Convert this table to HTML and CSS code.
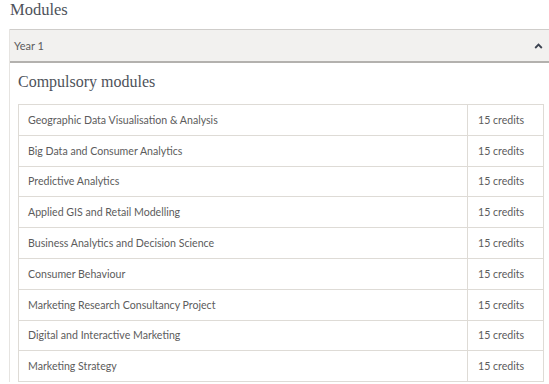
FILE: index.html
```html
<!DOCTYPE html>
<html lang="en">
<head>
    <meta charset="UTF-8">
    <meta name="viewport" content="width=device-width, initial-scale=1.0">
    <title>Modules</title>
    <link rel="stylesheet" href="styles.css">
</head>
<body>
    <div class="modules">
        <h2>Modules</h2>
        <div class="accordion">
            <div class="accordion-header">
                <span>Year 1</span>
                <svg class="chevron" width="9" height="6" viewBox="0 0 9 6">
                    <polyline points="1.2,5 4.5,1.6 7.8,5" fill="none" stroke="#3c4350" stroke-width="1.8"/>
                </svg>
            </div>
            <div class="accordion-body">
                <h3>Compulsory modules</h3>
                <table>
                    <tbody>
                        <tr><td>Geographic Data Visualisation &amp; Analysis</td><td class="credits">15 credits</td></tr>
                        <tr><td>Big Data and Consumer Analytics</td><td class="credits">15 credits</td></tr>
                        <tr><td>Predictive Analytics</td><td class="credits">15 credits</td></tr>
                        <tr><td>Applied GIS and Retail Modelling</td><td class="credits">15 credits</td></tr>
                        <tr><td>Business Analytics and Decision Science</td><td class="credits">15 credits</td></tr>
                        <tr><td>Consumer Behaviour</td><td class="credits">15 credits</td></tr>
                        <tr><td>Marketing Research Consultancy Project</td><td class="credits">15 credits</td></tr>
                        <tr><td>Digital and Interactive Marketing</td><td class="credits">15 credits</td></tr>
                        <tr><td>Marketing Strategy</td><td class="credits">15 credits</td></tr>
                    </tbody>
                </table>
            </div>
        </div>
    </div>
</body>
</html>
```

FILE: styles.css
```css
body {
    margin: 0;
    padding: 0;
    background-color: #fff;
    font-family: Lato, "Open Sans", sans-serif;
    color: #5c5c5c;
    overflow: hidden;
}
.modules {
    padding-left: 9px;
}
.modules h2 {
    font-family: "Liberation Serif", serif;
    font-weight: normal;
    font-size: 16.5px;
    line-height: 20px;
    color: #4e525a;
    margin: 0;
    padding: 0 0 0 1px;
    height: 29px;
}
.accordion {
    border-left: 1px solid #e6e4e1;
}
.accordion-header {
    display: flex;
    justify-content: space-between;
    align-items: center;
    height: 31px;
    padding: 0 6px 0 4px;
    background-color: #f2f1ef;
    border-top: 1px solid #cfcdca;
    border-bottom: 2px solid #b3b1ae;
    font-size: 11px;
    color: #5c5c5c;
}
.accordion-body {
    padding: 9px 5px 0 8px;
}
.accordion-body h3 {
    font-family: "Liberation Serif", serif;
    font-weight: normal;
    font-size: 16px;
    line-height: 20px;
    color: #4e525a;
    margin: 0 0 12px 0;
}
table {
    width: 526px;
    border-collapse: collapse;
}
table td {
    height: 30.8px;
    padding: 0 9px;
    border: 1px solid #dedbd6;
    font-size: 10.6px;
    text-align: left;
    color: #5c5c5c;
    box-sizing: border-box;
}
table td.credits {
    width: 76px;
    padding-left: 10px;
}
```
